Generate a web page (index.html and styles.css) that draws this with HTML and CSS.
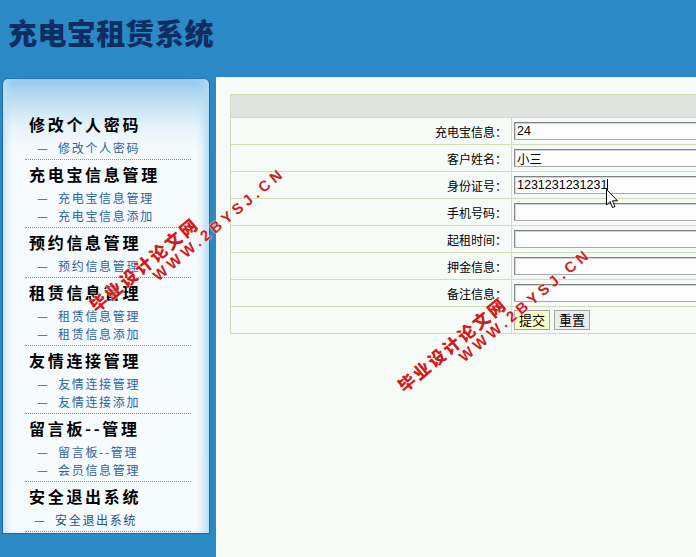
FILE: index.html
```html
<!DOCTYPE html>
<html lang="zh">
<head>
<meta charset="utf-8">
<title>充电宝租赁系统</title>
<link rel="stylesheet" href="styles.css">
</head>
<body>
<div class="header"><h1 class="title">充电宝租赁系统</h1></div>
<div class="main">
  <div class="side-wrap">
    <div class="side">
      <div class="group">
        <div class="gh">修改个人密码</div>
        <div class="gi"><span class="dash">—</span>修改个人密码</div>
      </div>
      <div class="group">
        <div class="gh">充电宝信息管理</div>
        <div class="gi"><span class="dash">—</span>充电宝信息管理</div>
        <div class="gi"><span class="dash">—</span>充电宝信息添加</div>
      </div>
      <div class="group">
        <div class="gh">预约信息管理</div>
        <div class="gi"><span class="dash">—</span>预约信息管理</div>
      </div>
      <div class="group">
        <div class="gh">租赁信息管理</div>
        <div class="gi"><span class="dash">—</span>租赁信息管理</div>
        <div class="gi"><span class="dash">—</span>租赁信息添加</div>
      </div>
      <div class="group">
        <div class="gh">友情连接管理</div>
        <div class="gi"><span class="dash">—</span>友情连接管理</div>
        <div class="gi"><span class="dash">—</span>友情连接添加</div>
      </div>
      <div class="group">
        <div class="gh">留言板--管理</div>
        <div class="gi"><span class="dash">—</span>留言板--管理</div>
        <div class="gi"><span class="dash">—</span>会员信息管理</div>
      </div>
      <div class="group">
        <div class="gh">安全退出系统</div>
        <div class="gi gi-exit"><span class="dash">—</span>安全退出系统</div>
      </div>
    </div>
  </div>
  <div class="content">
    <table class="form">
      <tr class="thead"><td colspan="2"></td></tr>
      <tr><td class="lbl">充电宝信息：</td><td class="val"><input class="inp" type="text" value="24"></td></tr>
      <tr><td class="lbl">客户姓名：</td><td class="val"><input class="inp" type="text" value="小三"></td></tr>
      <tr><td class="lbl">身份证号：</td><td class="val"><input class="inp" type="text" value="1231231231231"></td></tr>
      <tr><td class="lbl">手机号码：</td><td class="val"><input class="inp" type="text" value=""></td></tr>
      <tr><td class="lbl">起租时间：</td><td class="val"><input class="inp" type="text" value=""></td></tr>
      <tr><td class="lbl">押金信息：</td><td class="val"><input class="inp" type="text" value=""></td></tr>
      <tr><td class="lbl">备注信息：</td><td class="val"><input class="inp" type="text" value=""></td></tr>
      <tr><td class="lbl"></td><td class="val"><button class="btn btn-hot">提交</button><button class="btn">重置</button></td></tr>
    </table>
  </div>
</div>

<div class="caret"></div>
<svg class="pointer" width="13" height="20" viewBox="0 0 13 20"><path d="M0.5 0.5 L0.5 16 L4 12.5 L6.5 18.5 L9 17.5 L6.5 11.8 L11.5 11.8 Z" fill="#fff" stroke="#000" stroke-width="1"/></svg>

<div class="wm wm-cn wm1a">毕业设计论文网</div>
<div class="wm wm-en wm1b">WWW.2BYSJ.CN</div>
<div class="wm wm-cn wm2a">毕业设计论文网</div>
<div class="wm wm-en wm2b">WWW.2BYSJ.CN</div>
</body>
</html>
```
FILE: styles.css
```css
html, body {
  margin: 0;
  padding: 0;
}
body {
  width: 696px;
  height: 557px;
  overflow: hidden;
  background: #2b89c6;
  font-family: "Noto Sans CJK SC", "Liberation Sans", sans-serif;
  position: relative;
}
.header {
  height: 77px;
  padding-left: 8px;
  box-sizing: border-box;
}
.title {
  margin: 0;
  padding-top: 14px;
  font-size: 29px;
  line-height: 36px;
  font-weight: 900;
  color: #0e2e62;
  letter-spacing: 0.4px;
}
.main {
  display: flex;
  height: 480px;
}
.side-wrap {
  width: 216px;
  padding-left: 2px;
  padding-top: 1px;
  box-sizing: border-box;
  flex: none;
}
.side {
  width: 208px;
  box-sizing: border-box;
  border: 1px solid #1b6aa6;
  border-top-color: #2a78b4;
  border-radius: 6px 6px 0 0;
  background: linear-gradient(to bottom, #93c8eb 0px, #bfe0f3 22px, #e6f3fa 48px, #f5fbfc 70px, #f6fbfc 100%);
  box-shadow: inset 7px 0 7px -4px #c2e0f2, inset -9px 0 8px -4px #b6daf0;
  padding: 31px 0 1px 22px;
}
.group {
  width: 166px;
  border-bottom: 1px dotted #6e9db9;
  padding-bottom: 2px;
}
.gh {
  height: 28px;
  line-height: 28px;
  padding-left: 4px;
  font-size: 16px;
  font-weight: 700;
  letter-spacing: 2.7px;
  color: #000;
  margin-bottom: 1px;
  white-space: nowrap;
}
.gi {
  height: 18px;
  line-height: 18px;
  padding-left: 12px;
  font-size: 12px;
  letter-spacing: 1.7px;
  color: #2f62a3;
  white-space: nowrap;
}
.gi-exit {
  padding-left: 9px;
  color: #224f86;
}
.dash {
  display: inline-block;
  width: 21px;
  letter-spacing: 0;
}
.content {
  flex: 1;
  background: #f6fbf8;
  overflow: hidden;
  padding: 17px 0 0 14px;
  box-sizing: border-box;
}
.form {
  border-collapse: collapse;
  width: 720px;
  font-size: 12px;
  color: #000;
}
.form td {
  border: 1px solid #d2ddb8;
  padding: 0;
}
.thead td {
  height: 22px;
  background: #e0e3df;
}
.lbl {
  width: 276px;
  height: 26px;
  text-align: right;
  padding-right: 4px !important;
}
.val {
  padding-left: 2px !important;
  vertical-align: middle;
}
.inp {
  display: block;
  width: 400px;
  height: 18px;
  box-sizing: border-box;
  margin: 0;
  padding: 0 2px;
  border: 1px solid #a8a8a8;
  border-top-color: #808080;
  border-left-color: #8c8c8c;
  box-shadow: inset 1px 1px 0 #d4d4d4;
  background: #fcfdfc;
  font-family: "Liberation Sans", "Noto Sans CJK SC", sans-serif;
  font-size: 12.5px;
  color: #000;
  outline: none;
}
.btn {
  height: 20px;
  padding: 0 4px;
  margin: 0 6px 0 0;
  border: 1px solid #a6a6a6;
  background: #ededed;
  font-family: "Noto Sans CJK SC", sans-serif;
  font-size: 13px;
  line-height: 18px;
  color: #000;
  vertical-align: middle;
}
.btn-hot {
  background: #fbfbc6;
  margin-right: 4px;
}
.caret {
  position: absolute;
  left: 607px;
  top: 179px;
  width: 1px;
  height: 13px;
  background: #000;
}
.pointer {
  position: absolute;
  left: 606px;
  top: 189px;
}
.wm {
  position: absolute;
  transform-origin: 0 50%;
  transform: rotate(-40deg);
  color: #d01c1c;
  font-weight: 900;
  white-space: nowrap;
  line-height: 20px;
  text-shadow: 0 0 2px #fff, 0 0 1px #fff;
}
.wm-cn {
  font-size: 17px;
  letter-spacing: 2.4px;
}
.wm-en {
  font-family: "Liberation Sans", sans-serif;
  font-size: 15px;
  letter-spacing: 4px;
}
.wm1a { left: 92px; top: 298px; }
.wm1b { left: 155px; top: 268px; }
.wm2a { left: 400px; top: 378px; }
.wm2b { left: 461px; top: 349px; }
```
